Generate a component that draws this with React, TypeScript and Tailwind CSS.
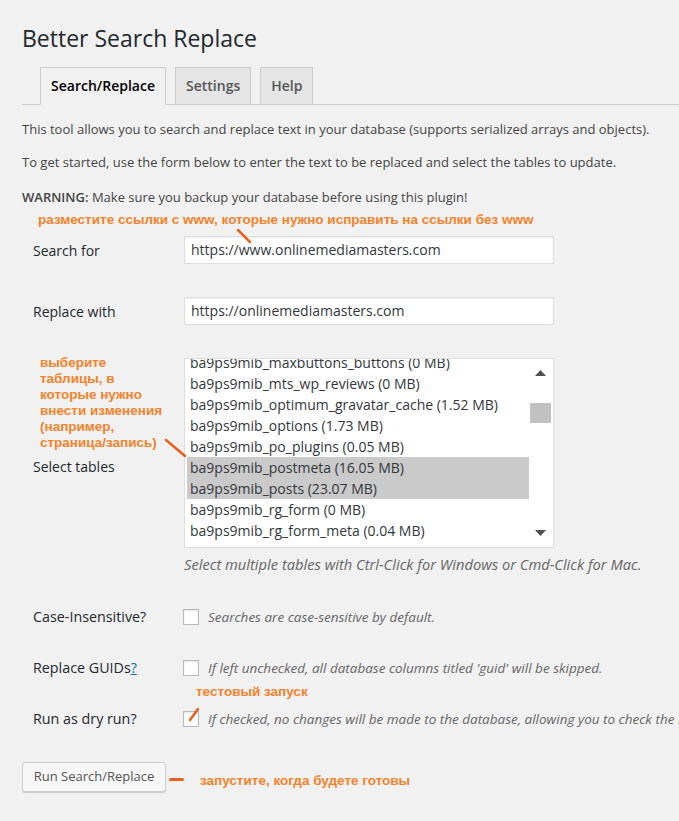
import React from "react";

const tables = [
  "ba9ps9mib_maxbuttons_buttons (0 MB)",
  "ba9ps9mib_mts_wp_reviews (0 MB)",
  "ba9ps9mib_optimum_gravatar_cache (1.52 MB)",
  "ba9ps9mib_options (1.73 MB)",
  "ba9ps9mib_po_plugins (0.05 MB)",
  "ba9ps9mib_postmeta (16.05 MB)",
  "ba9ps9mib_posts (23.07 MB)",
  "ba9ps9mib_rg_form (0 MB)",
  "ba9ps9mib_rg_form_meta (0.04 MB)",
];
const selected = new Set([5, 6]);

const anno = "font-['Liberation_Sans',Arial,sans-serif] font-bold text-[13.5px] text-[#f5822a]";

function Checkbox({ children }: { children?: React.ReactNode }) {
  return (
    <span className="relative inline-block w-[16px] h-[16px] border border-[#b4b9be] bg-white shadow-[inset_0_1px_2px_rgba(0,0,0,0.1)] shrink-0">
      {children}
    </span>
  );
}

export default function App() {
  return (
    <div className="w-[679px] h-[821px] overflow-hidden bg-[#f1f1f1] text-[#444] font-['Open_Sans','Noto_Sans',sans-serif] text-[13px] relative">
      <div className="pl-[22px]">
        <h1 className="pt-[23px] text-[23px] leading-[31px] text-[#23282d] font-normal">Better Search Replace</h1>
        <div className="mt-[13px] flex gap-[9px] pl-[18px] border-b border-[#ccc] h-[38px] items-end">
          <div className="h-[38px] px-[10px] border border-[#ccc] border-b-[#f1f1f1] bg-[#f1f1f1] text-[#000] font-semibold text-[14px] leading-[36px] -mb-px">Search/Replace</div>
          <div className="h-[37px] px-[10px] border border-[#ccc] border-b-0 bg-[#e5e5e5] text-[#555] font-semibold text-[14px] leading-[36px]">Settings</div>
          <div className="h-[37px] px-[10px] border border-[#ccc] border-b-0 bg-[#e5e5e5] text-[#555] font-semibold text-[14px] leading-[36px]">Help</div>
        </div>
        <p className="mt-[14px] leading-[20px] whitespace-nowrap">This tool allows you to search and replace text in your database (supports serialized arrays and objects).</p>
        <p className="mt-[13px] leading-[20px] whitespace-nowrap">To get started, use the form below to enter the text to be replaced and select the tables to update.</p>
        <p className="mt-[15px] leading-[20px] whitespace-nowrap"><strong className="font-semibold">WARNING:</strong> Make sure you backup your database before using this plugin!</p>
        <div className={`mt-[5px] pl-[16px] leading-[16px] ${anno}`}>разместите ссылки с www, которые нужно исправить на ссылки без www</div>

        <div className="relative mt-[8px] flex items-center h-[28px]">
          <div className="w-[162px] shrink-0 pl-[11px] text-[#23282d] text-[14px]">Search for</div>
          <div className="w-[370px] h-[28px] bg-white border border-[#ddd] shadow-[inset_0_1px_2px_rgba(0,0,0,0.07)] px-[6px] leading-[26px] text-[14px] text-[#32373c]">https://www.onlinemediamasters.com</div>
          <svg className="absolute left-[214px] top-[-7px]" width="18" height="18" viewBox="0 0 18 18"><line x1="2" y1="1" x2="14" y2="13" stroke="#e8601c" strokeWidth="2.5" strokeLinecap="round" /></svg>
        </div>

        <div className="mt-[33px] flex items-center h-[28px]">
          <div className="w-[162px] shrink-0 pl-[11px] text-[#23282d] text-[14px]">Replace with</div>
          <div className="w-[370px] h-[28px] bg-white border border-[#ddd] shadow-[inset_0_1px_2px_rgba(0,0,0,0.07)] px-[6px] leading-[26px] text-[14px] text-[#32373c]">https://onlinemediamasters.com</div>
        </div>

        <div className="mt-[33px] flex">
          <div className="relative w-[162px] shrink-0 pl-[11px]">
            <div className={`pl-[7px] mt-[-3px] leading-[16px] whitespace-nowrap ${anno}`}>
              выберите<br />таблицы, в<br />которые нужно<br />внести изменения<br />(например,<br />страница/запись)
            </div>
            <div className="mt-[6px] text-[#23282d] text-[14px] leading-[20px]">Select tables</div>
            <svg className="absolute left-[142px] top-[80px]" width="24" height="22" viewBox="0 0 24 22"><line x1="2" y1="2" x2="21" y2="18" stroke="#e8601c" strokeWidth="2.5" strokeLinecap="round" /></svg>
          </div>
          <div>
            <div className="w-[370px] h-[190px] bg-white border border-[#ddd] flex overflow-hidden">
              <div className="flex-1 overflow-hidden pl-[2px]">
                <div className="mt-[-7px]">
                  {tables.map((t, i) => (
                    <div key={t} className={`h-[21px] leading-[21px] pl-[3px] text-[14px] whitespace-nowrap text-[#32373c] ${selected.has(i) ? "bg-[#cacaca]" : ""}`}>{t}</div>
                  ))}
                </div>
              </div>
              <div className="w-[24px] flex flex-col items-center pr-[1px]">
                <svg className="mt-[11px]" width="11" height="6" viewBox="0 0 11 6"><polygon points="0,6 11,6 5.5,0" fill="#505050" /></svg>
                <div className="mt-[27px] w-[21px] h-[20px] bg-[#c1c1c1]" />
                <div className="flex-1" />
                <svg className="mb-[11px]" width="11" height="6" viewBox="0 0 11 6"><polygon points="0,0 11,0 5.5,6" fill="#505050" /></svg>
              </div>
            </div>
            <div className="mt-[6px] italic text-[#666] text-[14.7px] leading-[20px] whitespace-nowrap">Select multiple tables with Ctrl-Click for Windows or Cmd-Click for Mac.</div>
          </div>
        </div>

        <div className="mt-[33px] flex items-center h-[20px]">
          <div className="w-[161px] shrink-0 pl-[11px] text-[#23282d] text-[14.3px] whitespace-nowrap">Case-Insensitive?</div>
          <Checkbox />
          <span className="ml-[9px] italic text-[#666] text-[13.5px] whitespace-nowrap">Searches are case-sensitive by default.</span>
        </div>

        <div className="mt-[31px] flex items-center h-[20px]">
          <div className="w-[161px] shrink-0 pl-[11px] text-[#23282d] text-[14.3px] whitespace-nowrap">Replace GUIDs<a className="text-[#0073aa] underline">?</a></div>
          <Checkbox />
          <span className="ml-[9px] italic text-[#666] text-[13.5px] whitespace-nowrap">If left unchecked, all database columns titled 'guid' will be skipped.</span>
        </div>

        <div className={`mt-[6px] pl-[174px] leading-[16px] ${anno}`}>тестовый запуск</div>

        <div className="mt-[9px] flex items-center h-[20px]">
          <div className="w-[161px] shrink-0 pl-[11px] text-[#23282d] text-[14.3px] whitespace-nowrap">Run as dry run?</div>
          <Checkbox>
            <svg className="absolute left-[3px] top-[-5px]" width="14" height="16" viewBox="0 0 14 16"><line x1="11" y1="2" x2="3" y2="13" stroke="#e8601c" strokeWidth="2.5" strokeLinecap="round" /></svg>
          </Checkbox>
          <span className="ml-[9px] italic text-[#666] text-[13.5px] whitespace-nowrap">If checked, no changes will be made to the database, allowing you to check the results beforehand.</span>
        </div>

        <div className="mt-[33px] flex items-center">
          <button className="h-[30px] w-[144px] shrink-0 border border-[#ccc] bg-[#f7f7f7] rounded-[3px] shadow-[0_1px_0_#ccc] text-[13px] text-[#555] font-['Open_Sans','Noto_Sans',sans-serif]">Run Search/Replace</button>
          <div className="ml-[3px] mt-[5px] w-[15px] h-[3px] rounded bg-[#e8601c]" />
          <div className={`ml-[16px] mt-[8px] leading-[16px] ${anno}`}>запустите, когда будете готовы</div>
        </div>
      </div>
    </div>
  );
}
